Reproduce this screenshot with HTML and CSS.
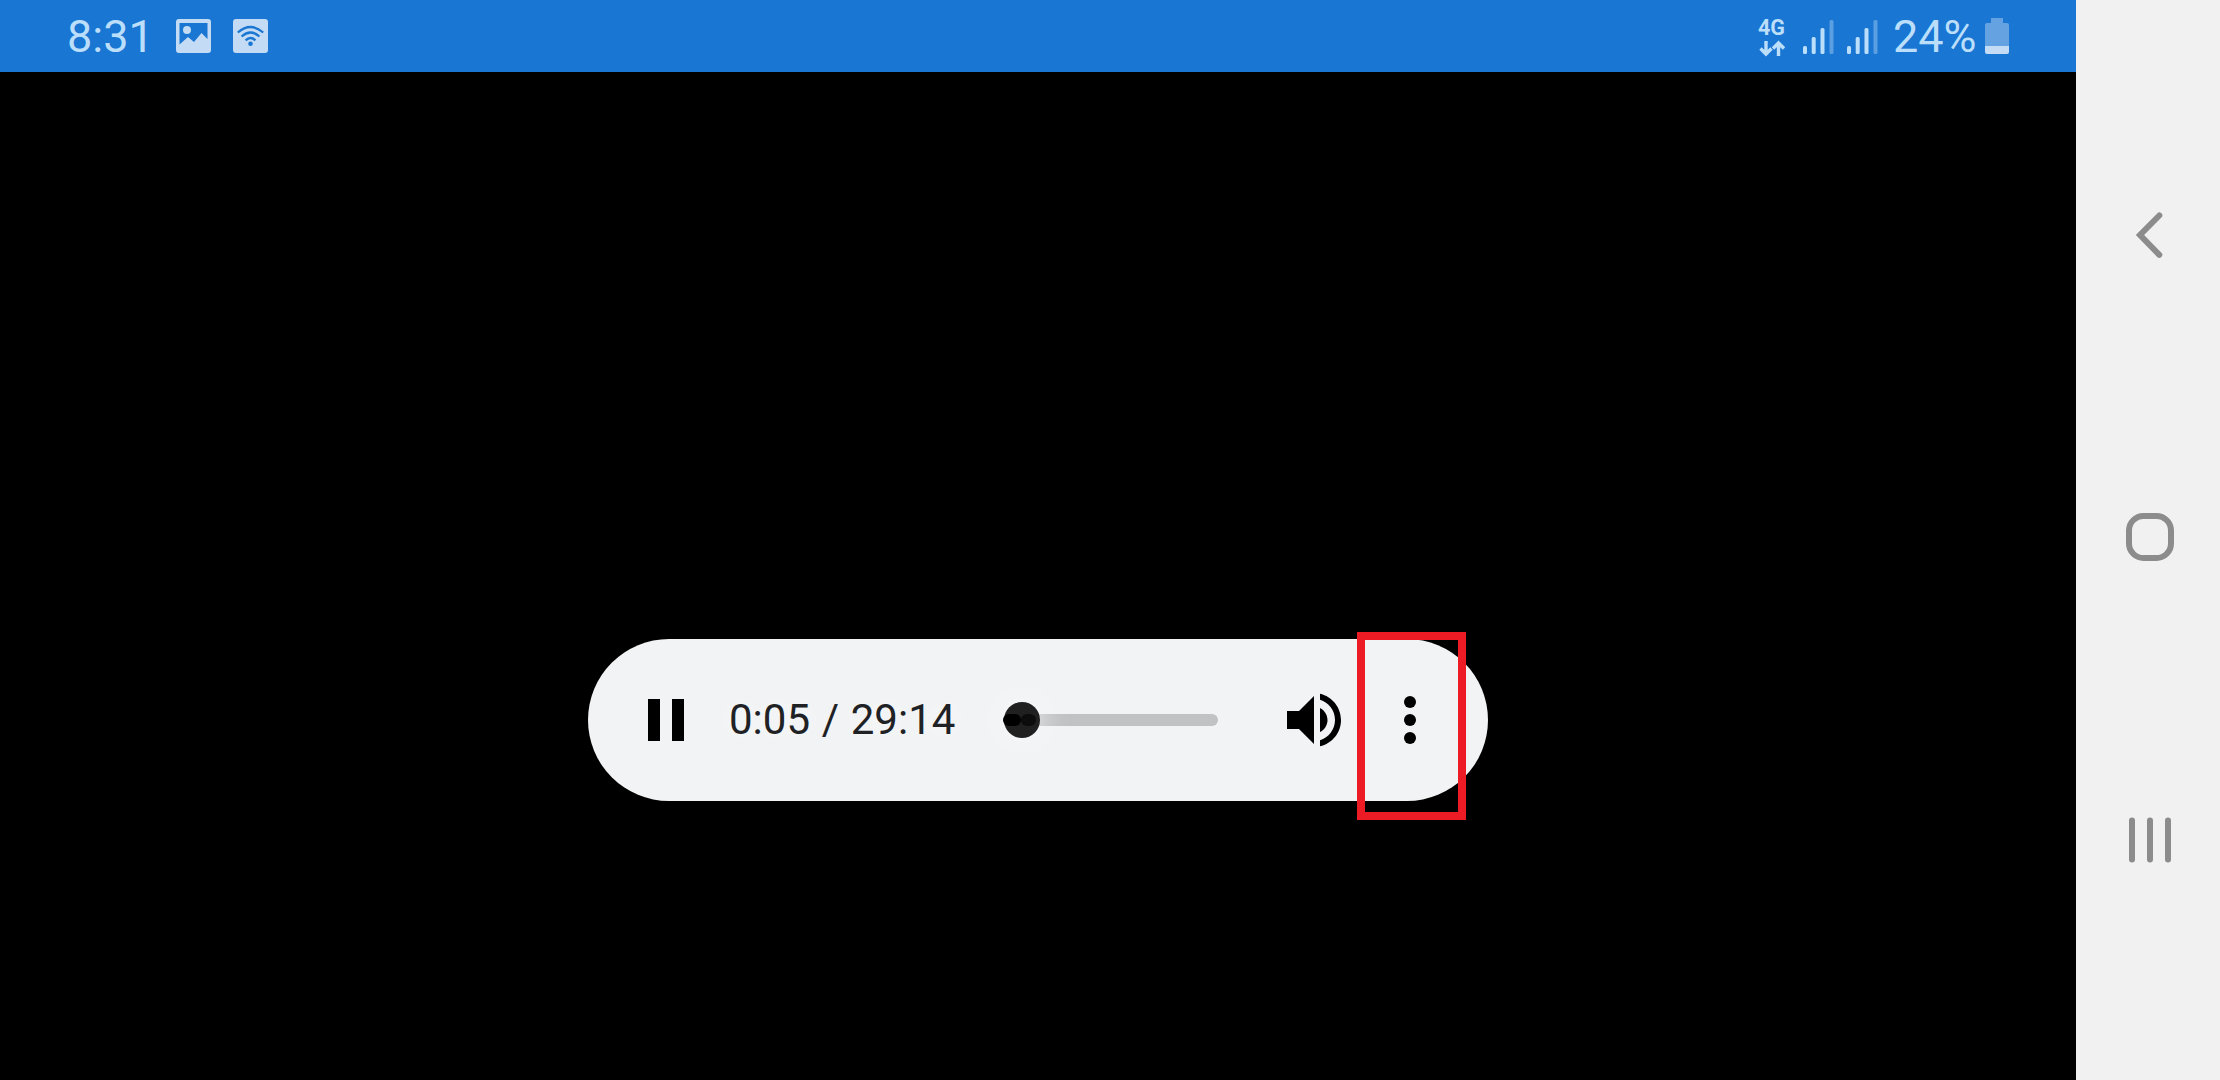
FILE: index.html
```html
<!DOCTYPE html>
<html lang="en">
<head>
<meta charset="utf-8">
<title>Audio player</title>
<link rel="stylesheet" href="styles.css">
</head>
<body>
<main class="screen">
  <header class="status-bar">
    <div class="status-left">
      <span class="clock">8:31</span>
      <svg class="notice" viewBox="0 0 35 34"><path fill="#c3dbf4" fill-rule="evenodd" d="M3 0H32Q35 0 35 3V31Q35 34 32 34H3Q0 34 0 31V3Q0 0 3 0ZM3.500 4V25.500L12 18L18 23L25.500 14L31.500 20V4Z"/><circle cx="11" cy="11" r="4" fill="#c3dbf4"/></svg>
      <svg class="notice" viewBox="0 0 35 34"><rect width="35" height="34" rx="3" fill="#c3dbf4"/><g fill="none" stroke="#1976d2" stroke-width="2.300"><path d="M4.800 13.500Q17.500 2.500 30.200 13.500M8.600 17.500Q17.500 9.500 26.400 17.500M12.600 21.300Q17.500 16.700 22.400 21.300"/></g><circle cx="17.500" cy="24.700" r="2.300" fill="#1976d2"/></svg>
    </div>
    <div class="status-right">
      <div class="network">
        <span class="network-type">4G</span>
        <svg class="arrows" viewBox="0 0 26 17" fill="none" stroke="#bbdefb" stroke-width="3.400"><path d="M7 1V14M1.500 8.500L7 14L12.500 8.500M19.500 16V3M14 8.500L19.500 3L25 8.500"/></svg>
      </div>
      <svg class="signal" viewBox="0 0 31 34" fill="#bbdefb"><rect y="26" width="4" height="8" rx="1.500"/><rect x="8.700" y="17" width="4" height="17" rx="1.500"/><rect x="17.500" y="8" width="4" height="26" rx="1.500"/><rect x="26.500" width="4" height="34" rx="1.500" opacity=".4"/></svg>
      <svg class="signal" viewBox="0 0 31 34" fill="#bbdefb"><rect y="26" width="4" height="8" rx="1.500"/><rect x="8.700" y="17" width="4" height="17" rx="1.500"/><rect x="17.500" y="8" width="4" height="26" rx="1.500"/><rect x="26.500" width="4" height="34" rx="1.500" opacity=".4"/></svg>
      <span class="charge">24%</span>
      <svg class="battery" viewBox="0 0 24 36"><path fill="#64a2e1" d="M6 0H18V5H22Q24 5 24 7V28H0V7Q0 5 2 5H6Z"/><path fill="#c3dbf4" d="M0 28H24V34Q24 36 22 36H2Q0 36 0 34Z"/></svg>
    </div>
  </header>
  <section class="stage">
    <div class="player">
      <svg class="icon" viewBox="0 0 24 24"><path d="M6 5h4v14H6zM14 5h4v14h-4z"/></svg>
      <span class="time">0:05 / 29:14</span>
      <div class="track">
        <span class="buffered"></span>
        <span class="thumb"></span>
        <span class="played"></span>
      </div>
      <svg class="icon volume" viewBox="0 0 24 24"><path d="M3 9v6h4l5 5V4L7 9H3zm13.500 3c0-1.770-1.020-3.290-2.500-4.030v8.050c1.480-.73 2.500-2.250 2.500-4.020zM14 3.230v2.060c2.890.86 5 3.540 5 6.710s-2.110 5.850-5 6.710v2.060c4.010-.91 7-4.490 7-8.770s-2.990-7.860-7-8.770z"/></svg>
      <div class="menu">
        <svg class="icon" viewBox="0 0 24 24"><circle cx="12" cy="6" r="2"/><circle cx="12" cy="12" r="2"/><circle cx="12" cy="18" r="2"/></svg>
        <span class="highlight"></span>
      </div>
    </div>
  </section>
</main>
<nav class="nav-bar">
  <svg class="nav-icon" viewBox="0 0 54 54"><path d="M36.300 7.500L17 27L36.300 46.800"/></svg>
  <svg class="nav-icon" viewBox="0 0 54 54"><rect x="6" y="6" width="42" height="42" rx="14.500"/></svg>
  <svg class="nav-icon" viewBox="0 0 54 54"><path d="M9 8.500V47.500M27 8.500V47.500M45 8.500V47.500"/></svg>
</nav>
</body>
</html>
```
FILE: styles.css
```css
* {
  box-sizing: border-box;
}

body {
  margin: 0;
  display: flex;
  height: 1080px;
  overflow: hidden;
  background: #000;
  font-family: Roboto, "Liberation Sans", sans-serif;
}

svg {
  display: block;
  flex: none;
}

.screen {
  display: flex;
  flex-direction: column;
  width: 2076px;
}

.status-bar {
  display: flex;
  justify-content: space-between;
  height: 72px;
  padding: 0 67px;
  background: #1976d2;
  color: #bbdefb;
}

.status-left,
.status-right {
  display: flex;
  align-items: center;
}

.clock,
.charge {
  padding-top: 2px;
  font-size: 45px;
  line-height: 74px;
  white-space: nowrap;
}

.clock {
  width: 87px;
}

.notice {
  width: 35px;
  height: 34px;
  margin-left: 22px;
}

.network {
  display: flex;
  flex-direction: column;
  align-items: center;
  width: 27px;
  padding-top: 2px;
}

.network-type {
  font-size: 21.5px;
  font-weight: 700;
  line-height: 20px;
}

.arrows {
  width: 26px;
  height: 17px;
  margin-top: 2px;
}

.signal {
  width: 31px;
  height: 34px;
  margin: 2px 0 0 13px;
}

.network + .signal {
  margin-left: 18px;
}

.charge {
  width: 84px;
  margin-left: 15px;
}

.battery {
  width: 24px;
  height: 36px;
  margin-left: 8px;
}

.stage {
  display: flex;
  flex: 1;
  justify-content: center;
  align-items: flex-start;
  padding-top: 567px;
}

.player {
  display: flex;
  align-items: center;
  width: 900px;
  height: 162px;
  padding: 0 42px;
  border-radius: 81px;
  background: #f1f3f4;
}

.icon {
  width: 72px;
  height: 72px;
}

.time {
  width: 244px;
  margin-left: 27px;
  color: #202124;
  font-size: 42px;
  line-height: 48px;
  word-spacing: 1.3px;
  white-space: nowrap;
  text-shadow: 0 0 30px #fff;
}

.track {
  position: relative;
  width: 215px;
  height: 12px;
  margin-left: 30px;
  border-radius: 6px;
  background: #c1c2c3;
}

.thumb {
  position: absolute;
  top: -12px;
  left: 1px;
  width: 36px;
  height: 36px;
  border-radius: 50%;
  background: #202020;
  box-shadow: 0 0 30px #fafafa;
}

.played,
.buffered {
  position: absolute;
  z-index: 1;
  top: 0;
  height: 12px;
  border-radius: 6px;
}

.played {
  left: 0;
  width: 18px;
  background: #000;
}

.buffered {
  left: 18px;
  width: 15px;
  background: #0c0c0c;
}

.volume {
  margin-left: 60px;
}

.menu {
  position: relative;
  margin-left: 24px;
}

.highlight {
  position: absolute;
  top: -52px;
  left: -17px;
  width: 109px;
  height: 188px;
  border: 8px solid #ed1c24;
}

.nav-bar {
  display: flex;
  flex-direction: column;
  align-items: center;
  gap: 248px;
  width: 144px;
  padding: 208px 0 0 4px;
  background: #f1f1f1;
}

.nav-icon {
  width: 54px;
  height: 54px;
  fill: none;
  stroke: #8c8c8c;
  stroke-width: 6px;
  stroke-linecap: round;
}
```
